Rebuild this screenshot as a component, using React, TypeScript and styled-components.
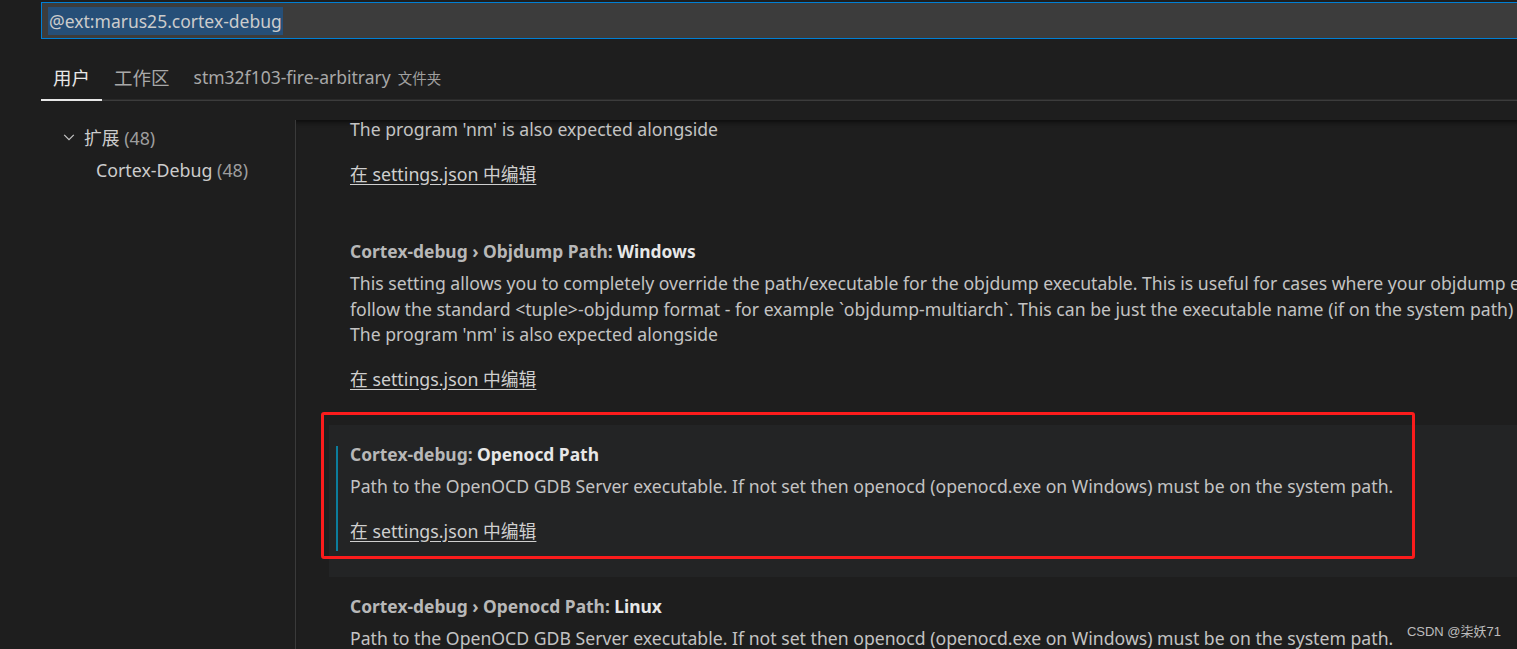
import React from 'react';
import styled, { createGlobalStyle } from 'styled-components';

const GlobalStyle = createGlobalStyle`
  html, body {
    margin: 0;
    padding: 0;
    background: #1e1e1e;
  }
  * {
    box-sizing: border-box;
  }
`;

const FONT = `"Noto Sans", "Noto Sans CJK SC", sans-serif`;

const Window = styled.div`
  width: 100vw;
  height: 100vh;
  background: #1e1e1e;
  color: #cccccc;
  font-family: ${FONT};
  display: flex;
  flex-direction: column;
  overflow: hidden;
  position: relative;
`;

const Header = styled.div`
  padding: 2px 0 0 41px;
`;

const SearchBox = styled.div`
  height: 37px;
  width: calc(100% + 10px);
  border: 1px solid #007fd4;
  background: #3c3c3c;
  display: flex;
  align-items: center;
  padding-left: 6px;
`;

const Selected = styled.span`
  background: #264f78;
  color: #cccccc;
  font-size: 17.5px;
  line-height: 28px;
  padding: 0 1px;
`;

const TabBar = styled.div`
  display: flex;
  height: 62px;
  padding-top: 16px;
  box-shadow: inset 0 -1px 0 #3c3c3c, inset 0 -2px 0 #2a2a2a;
`;

const Tab = styled.div<{ $active?: boolean }>`
  display: flex;
  align-items: center;
  gap: 7px;
  padding: 0 12px;
  font-size: 18.5px;
  color: ${({ $active }) => ($active ? '#e7e7e7' : '#a8a8a8')};
  border-bottom: 2px solid ${({ $active }) => ($active ? '#e7e7e7' : 'transparent')};
`;

const FolderName = styled.span`
  font-size: 17.5px;
`;

const TabHint = styled.span`
  font-size: 14.5px;
  color: #a0a0a0;
`;

const Body = styled.div`
  flex: 1;
  margin-top: 19px;
  display: grid;
  grid-template-columns: 295px 1fr;
  min-height: 0;
`;

const Sidebar = styled.div`
  display: flex;
  flex-direction: column;
`;

const TreeRow = styled.div<{ $indent: number }>`
  height: 33px;
  display: flex;
  align-items: center;
  padding-left: ${({ $indent }) => $indent}px;
  gap: 8px;
  font-size: 17.8px;
  color: #cccccc;
  white-space: nowrap;
`;

const Count = styled.span`
  color: #9d9d9d;
`;

const Panel = styled.div`
  border-left: 1px solid #3a3a3a;
  box-shadow: inset 0 6px 5px -4px #0c0c0c;
  overflow: hidden;
  min-width: 0;
`;

const SettingList = styled.div`
  margin-top: -3px;
  display: flex;
  flex-direction: column;
`;

const SettingItem = styled.div<{ $focused?: boolean; $cut?: boolean }>`
  position: relative;
  margin-left: 33px;
  padding: ${({ $cut }) => ($cut ? '0 0 35px' : '17.5px 0 33px')} 21px;
  background: ${({ $focused }) => ($focused ? '#232425' : 'transparent')};
  white-space: nowrap;

  ${({ $focused }) =>
    $focused &&
    `
    &::before {
      content: '';
      position: absolute;
      left: 7px;
      top: 21px;
      bottom: 26px;
      width: 2px;
      background: #0c7d9d;
    }
  `}
`;

const Title = styled.div`
  font-size: 17.4px;
  line-height: 25px;
  font-weight: 700;
  color: #b8b8b8;
`;

const Key = styled.span`
  color: #e7e7e7;
`;

const Description = styled.div<{ $first?: boolean }>`
  margin-top: ${({ $first }) => ($first ? '0' : '7px')};
  font-size: 17.65px;
  line-height: 25.5px;
  color: #c3c3c3;
`;

const EditLink = styled.a`
  display: inline-block;
  margin-top: 19px;
  font-size: 17.8px;
  line-height: 25px;
  color: #cfcfcf;
  text-decoration: underline;
  text-underline-offset: 3px;
  cursor: pointer;
`;

const Annotation = styled.div`
  position: absolute;
  left: -8px;
  top: -13px;
  width: 1094px;
  height: 147px;
  border: 3px solid #fb1c1c;
  border-radius: 3px;
  pointer-events: none;
`;

const Watermark = styled.div`
  position: absolute;
  right: 16px;
  bottom: 9px;
  font-family: "Liberation Sans", "Noto Sans CJK SC", sans-serif;
  font-size: 13px;
  color: #d8d8d8;
  opacity: 0.85;
`;

const Chevron = () => (
  <svg width="14" height="14" viewBox="0 0 16 16" fill="none">
    <path d="M2.5 5.5 L8 11 L13.5 5.5" stroke="#c5c5c5" strokeWidth="1.4" />
  </svg>
);

const NM_LINE = "The program 'nm' is also expected alongside";
const OCD_DESC =
  'Path to the OpenOCD GDB Server executable. If not set then openocd (openocd.exe on Windows) must be on the system path.';

export default function App() {
  return (
    <>
      <GlobalStyle />
      <Window>
        <Header>
          <SearchBox>
            <Selected>@ext:marus25.cortex-debug</Selected>
          </SearchBox>
          <TabBar>
            <Tab $active>用户</Tab>
            <Tab>工作区</Tab>
            <Tab>
              <FolderName>stm32f103-fire-arbitrary</FolderName>
              <TabHint>文件夹</TabHint>
            </Tab>
          </TabBar>
        </Header>
        <Body>
          <Sidebar>
            <TreeRow $indent={62}>
              <Chevron />
              <span>
                扩展 <Count>(48)</Count>
              </span>
            </TreeRow>
            <TreeRow $indent={96}>
              <span>
                Cortex-Debug <Count>(48)</Count>
              </span>
            </TreeRow>
          </Sidebar>
          <Panel>
            <SettingList>
              <SettingItem $cut>
                <Description $first>{NM_LINE}</Description>
                <EditLink>在 settings.json 中编辑</EditLink>
              </SettingItem>
              <SettingItem>
                <Title>
                  Cortex-debug › Objdump Path: <Key>Windows</Key>
                </Title>
                <Description>
                  This setting allows you to completely override the path/executable for the objdump executable. This is useful for cases where your objdump executable does not
                  <br />
                  follow the standard &lt;tuple&gt;-objdump format - for example `objdump-multiarch`. This can be just the executable name (if on the system path) or the full path to the executable.
                  <br />
                  {NM_LINE}
                </Description>
                <EditLink>在 settings.json 中编辑</EditLink>
              </SettingItem>
              <SettingItem $focused>
                <Annotation />
                <Title>
                  Cortex-debug: <Key>Openocd Path</Key>
                </Title>
                <Description>{OCD_DESC}</Description>
                <EditLink>在 settings.json 中编辑</EditLink>
              </SettingItem>
              <SettingItem>
                <Title>
                  Cortex-debug › Openocd Path: <Key>Linux</Key>
                </Title>
                <Description>{OCD_DESC}</Description>
              </SettingItem>
            </SettingList>
          </Panel>
        </Body>
        <Watermark>CSDN @柒妖71</Watermark>
      </Window>
    </>
  );
}
